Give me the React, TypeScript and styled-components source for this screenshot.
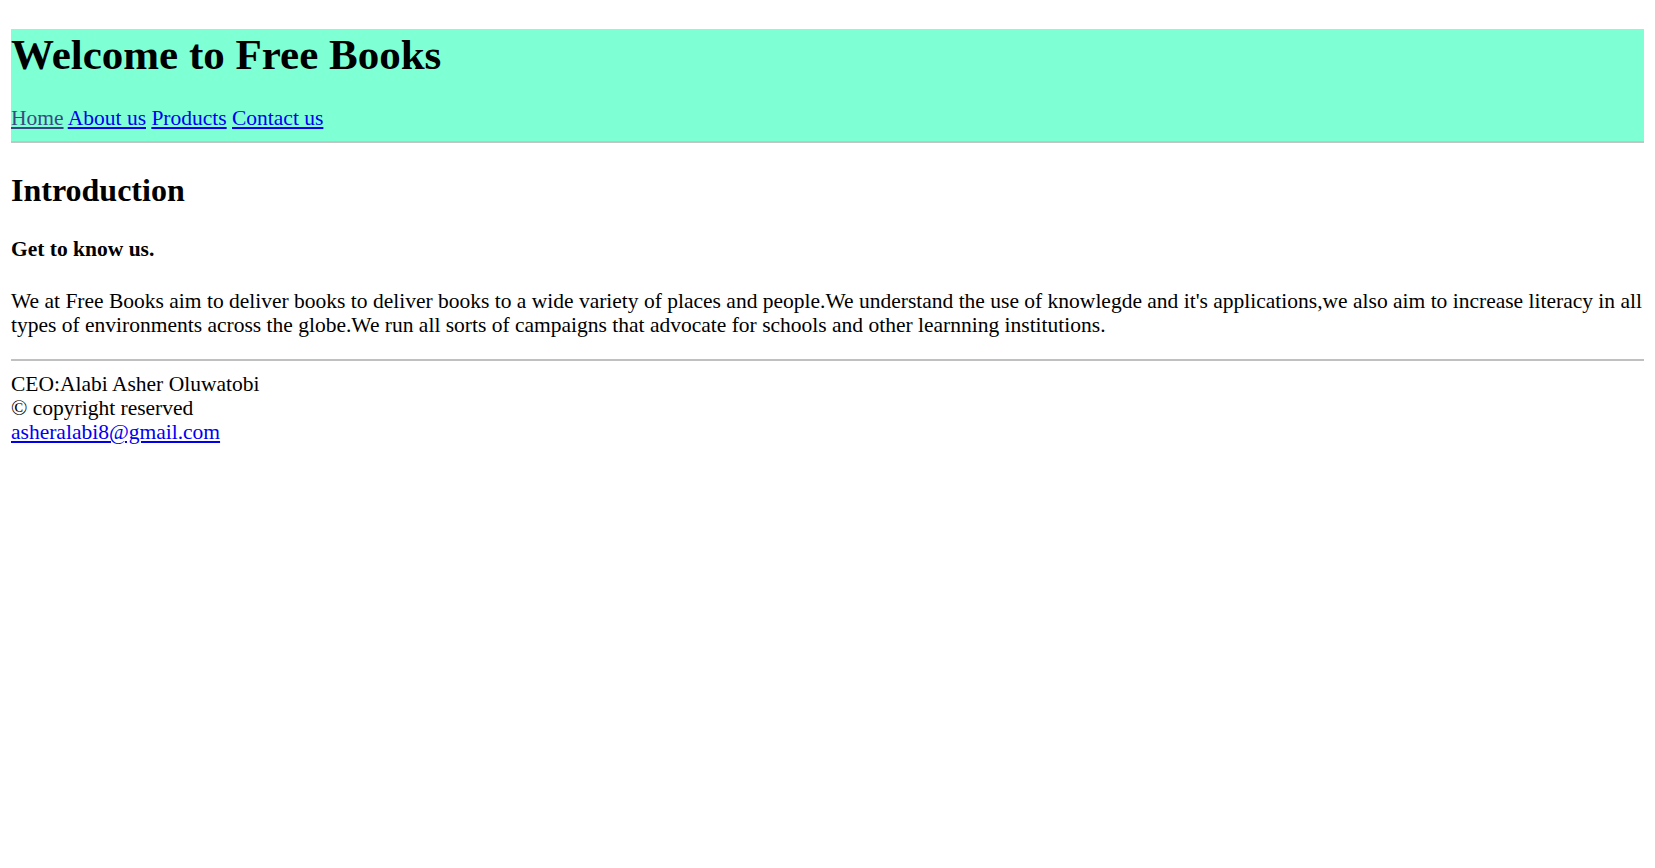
import React from "react";
import styled, { createGlobalStyle } from "styled-components";

const GlobalStyle = createGlobalStyle`
  html, body {
    margin: 0;
    padding: 0;
    background: #ffffff;
  }
  body {
    font-family: "Liberation Serif", "Times New Roman", serif;
    color: #000000;
  }
`;

const Page = styled.div`
  padding: 29px 11px 40px 11px;
  font-family: "Liberation Serif", "Times New Roman", serif;
`;

const Header = styled.header`
  background: #7fffd4;
  padding: 0 0 10px 0;
  border-bottom: 2px solid #c4c4c4;
`;

const Title = styled.h1`
  margin: 0 0 26px 0;
  font-size: 43px;
  line-height: 51px;
  font-weight: bold;
`;

const Nav = styled.nav`
  font-size: 21.5px;
  line-height: 25px;
`;

const NavLink = styled.a<{ $current?: boolean }>`
  color: ${(p) => (p.$current ? "#394a80" : "#0000ee")};
  text-decoration: underline;
`;

const Main = styled.main`
  display: block;
`;

const SectionTitle = styled.h2`
  margin: 28px 0 0 0;
  font-size: 32px;
  line-height: 38px;
  font-weight: bold;
`;

const SubTitle = styled.h4`
  margin: 28px 0 0 0;
  font-size: 21.5px;
  line-height: 25px;
  font-weight: bold;
`;

const Paragraph = styled.p`
  margin: 27px 0 0 0;
  font-size: 21.5px;
  line-height: 24.3px;
`;

const Rule = styled.hr`
  margin: 21px 0 0 0;
  border: none;
  border-top: 2px solid #c0c0c0;
  height: 0;
`;

const Footer = styled.footer`
  margin-top: 11px;
  font-size: 21.5px;
  line-height: 24.3px;
  display: flex;
  flex-direction: column;
  align-items: flex-start;
`;

const MailLink = styled.a`
  color: #0000ee;
  text-decoration: underline;
`;

export default function App() {
  return (
    <>
      <GlobalStyle />
      <Page>
        <Header>
          <Title>Welcome to Free Books</Title>
          <Nav>
            <NavLink href="#" $current>
              Home
            </NavLink>{" "}
            <NavLink href="#">About us</NavLink>{" "}
            <NavLink href="#">Products</NavLink>{" "}
            <NavLink href="#">Contact us</NavLink>
          </Nav>
        </Header>
        <Main>
          <SectionTitle>Introduction</SectionTitle>
          <SubTitle>Get to know us.</SubTitle>
          <Paragraph>
            We at Free Books aim to deliver books to deliver books to a wide
            variety of places and people.We understand the use of knowlegde and
            it's applications,we also aim to increase literacy in all types of
            environments across the globe.We run all sorts of campaigns that
            advocate for schools and other learnning institutions.
          </Paragraph>
        </Main>
        <Rule />
        <Footer>
          <span>CEO:Alabi Asher Oluwatobi</span>
          <span>© copyright reserved</span>
          <MailLink href="#">asheralabi8@gmail.com</MailLink>
        </Footer>
      </Page>
    </>
  );
}
